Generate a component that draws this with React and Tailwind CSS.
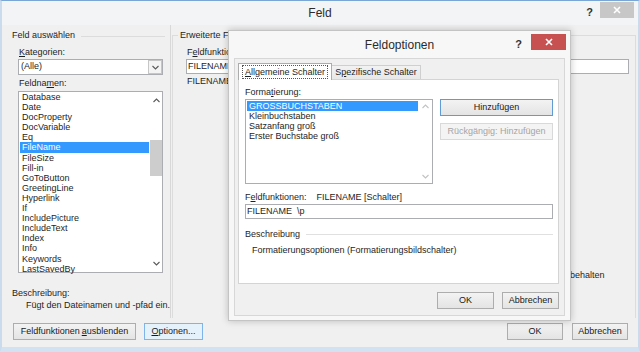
import React from 'react'

const fieldNames = [
  'Database', 'Date', 'DocProperty', 'DocVariable', 'Eq', 'FileName', 'FileSize', 'Fill-in',
  'GoToButton', 'GreetingLine', 'Hyperlink', 'If', 'IncludePicture', 'IncludeText', 'Index',
  'Info', 'Keywords', 'LastSavedBy',
]

const formats = ['GROSSBUCHSTABEN', 'Kleinbuchstaben', 'Satzanfang groß', 'Erster Buchstabe groß']

function Chevron({ dir = 'down', color = '#5a5a5a' }) {
  return (
    <svg width="7" height="5" viewBox="0 0 7 5">
      <polyline
        points={dir === 'down' ? '0.5,1 3.5,4 6.5,1' : '0.5,4 3.5,1 6.5,4'}
        fill="none" stroke={color} strokeWidth="1.1"
      />
    </svg>
  )
}

function CloseX() {
  return (
    <svg width="8" height="8" viewBox="0 0 8 8">
      <path d="M1 1 L7 7 M7 1 L1 7" stroke="#fff" strokeWidth="1.6" />
    </svg>
  )
}

function Btn({ children, className = '', variant = 'default' }) {
  const look = {
    default: 'border-[#adadad] bg-linear-to-b from-[#f3f3f3] to-[#e4e4e4] text-[#1a1a1a]',
    focus: 'border-[#7eb4ea] bg-[#e5f1fb] text-[#1a1a1a]',
    primary: 'border-[#5f9bd4] bg-linear-to-b from-[#f3f3f3] to-[#e4e4e4] text-[#1a1a1a]',
    disabled: 'border-[#d9d9d9] bg-[#f4f4f4] text-[#a5a5a5]',
  }[variant]
  return (
    <div className={`h-[17px] border flex items-center justify-center whitespace-nowrap ${look} ${className}`}>
      {children}
    </div>
  )
}

function FieldList() {
  return (
    <div className="ml-[16px] mt-[2px] w-[145px] h-[182px] border border-[#abadb3] bg-white flex">
      <div className="w-[131px]">
        {fieldNames.map((n) => (
          <div
            key={n}
            className={`h-[10.1px] leading-[10.1px] ml-[1px] mr-[1px] pl-[2px] whitespace-nowrap ${
              n === 'FileName' ? 'bg-[#3399ff] text-white' : ''
            }`}
          >
            {n}
          </div>
        ))}
      </div>
      <div className="flex-1 flex flex-col">
        <div className="h-[17px] flex items-center justify-center"><Chevron dir="up" /></div>
        <div className="flex-1">
          <div className="mt-[31px] h-[36px] bg-[#cdcdcd]" />
        </div>
        <div className="h-[17px] flex items-center justify-center"><Chevron /></div>
      </div>
    </div>
  )
}

function FeldOptionen() {
  return (
    <div className="absolute left-[226px] top-[29px] w-[343px] h-[291px] border border-[#c4c4c4] bg-[#f7f7f7] shadow-[0_0_7px_rgba(0,0,0,0.22)] flex flex-col">
      <div className="relative h-[24px] pt-[4px] flex items-center justify-center text-[12px] text-[#2b2b2b]">
        Feldoptionen
        <span className="absolute right-[48px] top-[5px] text-[11px] font-bold text-[#333]">?</span>
        <div className="absolute right-[4px] top-[3px] w-[35px] h-[16px] bg-[#c75050] flex items-center justify-center">
          <CloseX />
        </div>
      </div>
      <div className="flex-1 mt-[3px] mx-[5px] mb-[4px] border border-[#d7d7d7] bg-[#f0f0f0] pl-[3px] pr-[5px] flex flex-col">
        <div className="mt-[4px] flex items-end">
          <div className="relative z-10 -mb-px h-[17px] w-[94px] border border-b-0 border-[#acacac] bg-white flex items-center justify-center">
            <span className="border border-dotted border-[#555] px-[2px] leading-[12px]">
              <span className="underline">A</span>llgemeine Schalter
            </span>
          </div>
          <div className="h-[14px] w-[89px] border border-l-0 border-b-0 border-[#cfcfcf] bg-linear-to-b from-[#f2f2f2] to-[#e8e8e8] flex items-center justify-center">
            <span>S<span className="underline">p</span>ezifische Schalter</span>
          </div>
        </div>
        <div className="h-[205px] border border-[#d4d4d4] bg-white pl-[6px] pt-[6px] flex flex-col">
          <div className="leading-[12px]">Forma<span className="underline">t</span>ierung:</div>
          <div className="mt-[1px] flex">
            <div className="w-[188px] h-[85px] border border-[#abadb3] flex">
              <div className="w-[172px] pt-[1px]">
                {formats.map((f, i) => (
                  <div
                    key={f}
                    className={`h-[10px] leading-[10px] ml-[1px] pl-[2px] whitespace-nowrap ${
                      i === 0 ? 'bg-[#3399ff] text-white' : ''
                    }`}
                  >
                    {f}
                  </div>
                ))}
              </div>
              <div className="flex-1 flex flex-col justify-between py-[4px] items-center">
                <Chevron dir="up" color="#c2c2c2" />
                <Chevron color="#c2c2c2" />
              </div>
            </div>
            <div className="ml-[7px] w-[113px] flex flex-col">
              <Btn variant="primary">Hinzufügen</Btn>
              <Btn variant="disabled" className="mt-[7px]">Rückgängig: Hinzufügen</Btn>
            </div>
          </div>
          <div className="mt-[7px] leading-[12px] whitespace-nowrap">
            F<span className="underline">e</span>ldfunktionen:&nbsp;&nbsp;&nbsp; FILENAME [Schalter]
          </div>
          <div className="mt-[1px] w-[308px] h-[15px] border border-[#abadb3] pl-[1px] leading-[13px]">
            FILENAME&nbsp;&nbsp;\p
          </div>
          <div className="mt-[9px] w-[308px] flex items-center leading-[12px]">
            <span>Beschreibung</span>
            <div className="flex-1 ml-[6px] h-px bg-[#e0e0e0]" />
          </div>
          <div className="mt-[4px] pl-[7px] leading-[12px] whitespace-nowrap">
            Formatierungsoptionen (Formatierungsbildschalter)
          </div>
        </div>
        <div className="mt-[8px] flex justify-end gap-[8px]">
          <Btn className="w-[57px]">OK</Btn>
          <Btn className="w-[57px]">Abbrechen</Btn>
        </div>
      </div>
    </div>
  )
}

export default function App() {
  return (
    <div className="relative w-[640px] h-[352px] overflow-hidden bg-[#f0f0f0] text-[9px] text-[#1e1e1e] font-['Liberation_Sans',Arial,sans-serif] border-t border-t-[#7aa6d6] border-x-2 border-x-[#cadbee] border-b-[5px] border-b-[#d3e2f3] flex flex-col">
      <div className="relative h-[24px] bg-[#f2f4f6] flex items-center justify-center text-[12px] text-[#2b2b2b]">
        Feld
        <span className="absolute right-[45px] top-[3px] text-[11px] font-bold text-[#333]">?</span>
        <div className="absolute right-[4px] top-[1px] w-[34px] h-[16px] bg-[#c7c7c7] flex items-center justify-center">
          <CloseX />
        </div>
      </div>

      <div className="flex h-[293px]">
        <div className="w-[169px] border-r border-[#d8d8d8] flex flex-col">
          <div className="mt-[5px] h-[12px] pl-[10px] flex items-center">
            <span className="whitespace-nowrap">Feld auswählen</span>
            <div className="flex-1 ml-[6px] mr-[5px] h-px bg-[#dcdcdc]" />
          </div>
          <div className="mt-[4px] pl-[17px] leading-[12px]"><span className="underline">K</span>ategorien:</div>
          <div className="ml-[16px] mt-[1px] w-[145px] h-[16px] border border-[#abadb3] bg-white flex items-center">
            <span className="pl-[2px] flex-1">(Alle)</span>
            <div className="w-[14px] h-[14px] border border-[#c6c6c6] bg-[#f4f4f4] flex items-center justify-center">
              <Chevron />
            </div>
          </div>
          <div className="mt-[2px] pl-[17px] leading-[12px]">Feldna<span className="underline">m</span>en:</div>
          <FieldList />
          <div className="mt-[14px] pl-[10px] leading-[12px]">Beschreibung:</div>
          <div className="pl-[24px] leading-[12px] whitespace-nowrap">Fügt den Dateinamen und -pfad ein.</div>
        </div>

        <div className="ml-[1px] mt-[10px] w-[464px] border border-b-0 border-[#dcdcdc] flex flex-col">
          <div className="-mt-[7px] ml-[5px] px-[2px] w-fit bg-[#f0f0f0] leading-[12px] whitespace-nowrap">
            Erweiterte Feldeigenschaften
          </div>
          <div className="mt-[5px] pl-[14px] leading-[12px]">F<span className="underline">e</span>ldfunktionen:</div>
          <div className="mt-[1px] ml-[13px] w-[443px] h-[15px] border border-[#abadb3] bg-white pl-[1px] leading-[13px]">
            FILENAME
          </div>
          <div className="mt-[1px] pl-[14px] leading-[12px]">FILENAME</div>
          <div className="mt-[182px] pl-[397px] leading-[12px]">behalten</div>
        </div>
      </div>

      <div className="mt-[5px] px-[11px] pr-[10px] flex items-center">
        <Btn className="w-[123px]">Feldfunktionen <span className="underline ml-[2px]">a</span>usblenden</Btn>
        <Btn variant="focus" className="ml-[8px] w-[59px]"><span className="underline">O</span>ptionen...</Btn>
        <div className="flex-1" />
        <Btn className="w-[56px]">OK</Btn>
        <Btn className="ml-[9px] w-[56px]">Abbrechen</Btn>
      </div>

      <FeldOptionen />
    </div>
  )
}
